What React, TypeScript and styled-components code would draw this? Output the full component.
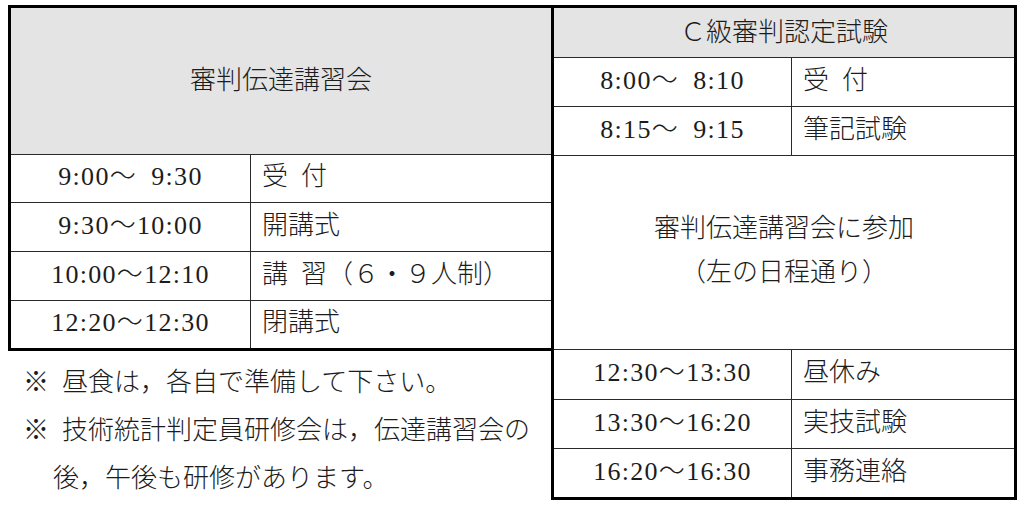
import { Fragment } from "react";
import styled, { createGlobalStyle } from "styled-components";

const GlobalStyle = createGlobalStyle`
    html, body {
        margin: 0;
        padding: 0;
        background: #ffffff;
    }
    body {
        font-family: "Liberation Serif", "Noto Sans CJK JP", serif;
        color: #1c1c1c;
    }
`

const Page = styled.div`
    padding: 5px 0 0 8px;
    display: flex;
    align-items: flex-start;
`

const LeftColumn = styled.div`
    width: 546px;
    display: flex;
    flex-direction: column;
`

const Table = styled.div<{ $cols: string; $rows: string; $overlap?: boolean }>`
    box-sizing: border-box;
    display: grid;
    grid-template-columns: ${(p) => p.$cols};
    grid-template-rows: ${(p) => p.$rows};
    gap: 1px;
    background: #2a2a2a;
    border: 3px solid #000;
    margin-left: ${(p) => (p.$overlap ? "-3px" : "0")};
    width: ${(p) => (p.$overlap ? "466px" : "546px")};
    position: relative;
`

const Cell = styled.div<{ $head?: boolean; $span?: boolean; $left?: boolean; $time?: boolean }>`
    background: ${(p) => (p.$head ? "#e4e4e4" : "#ffffff")};
    grid-column: ${(p) => (p.$span ? "1 / -1" : "auto")};
    display: flex;
    flex-direction: column;
    align-items: ${(p) => (p.$left ? "flex-start" : "center")};
    justify-content: center;
    padding-left: ${(p) => (p.$left ? "11px" : "0")};
    padding-bottom: ${(p) => (p.$head ? "0" : "3px")};
    font-size: 26px;
    line-height: 44px;
    font-weight: 300;
    letter-spacing: ${(p) => (p.$time ? "1.3px" : "0")};
    white-space: pre;
`

const Notes = styled.div`
    margin-top: 8px;
    font-size: 26px;
    line-height: 48px;
    font-weight: 300;
`

const NoteLine = styled.div<{ $indent?: boolean }>`
    display: flex;
    padding-left: ${(p) => (p.$indent ? "45px" : "15px")};
    white-space: nowrap;
`

const Mark = styled.span`
    width: 39px;
    flex-shrink: 0;
`

const leftRows = [
    ["9:00～\u20079:30", "受\u2002付"],
    ["9:30～10:00", "開講式"],
    ["10:00～12:10", "講\u2002習（６・９人制）"],
    ["12:20～12:30", "閉講式"],
];

const rightTop = [
    ["8:00～\u20078:10", "受\u2002付"],
    ["8:15～\u20079:15", "筆記試験"],
];

const rightBottom = [
    ["12:30～13:30", "昼休み"],
    ["13:30～16:20", "実技試験"],
    ["16:20～16:30", "事務連絡"],
];

const Rows = ({ rows }: { rows: string[][] }) => (
    <>
        {rows.map(([time, label]) => (
            <Fragment key={time}>
                <Cell $time>{time}</Cell>
                <Cell $left>{label}</Cell>
            </Fragment>
        ))}
    </>
)

const App = () => {
    return (
        <>
            <GlobalStyle />
            <Page>
                <LeftColumn>
                    <Table $cols="239px 300px" $rows="146px 47px 48px 48px 47px">
                        <Cell $head $span>審判伝達講習会</Cell>
                        <Rows rows={leftRows} />
                    </Table>
                    <Notes>
                        <NoteLine>
                            <Mark>※</Mark>昼食は，各自で準備して下さい。
                        </NoteLine>
                        <NoteLine>
                            <Mark>※</Mark>技術統計判定員研修会は，伝達講習会の
                        </NoteLine>
                        <NoteLine $indent>後，午後も研修があります。</NoteLine>
                    </Notes>
                </LeftColumn>
                <Table $overlap $cols="237px 222px" $rows="49px 48px 48px 193px 49px 48px 48px">
                    <Cell $head $span>Ｃ級審判認定試験</Cell>
                    <Rows rows={rightTop} />
                    <Cell $span>
                        <span>審判伝達講習会に参加</span>
                        <span>（左の日程通り）</span>
                    </Cell>
                    <Rows rows={rightBottom} />
                </Table>
            </Page>
        </>
    )
}

export default App;
